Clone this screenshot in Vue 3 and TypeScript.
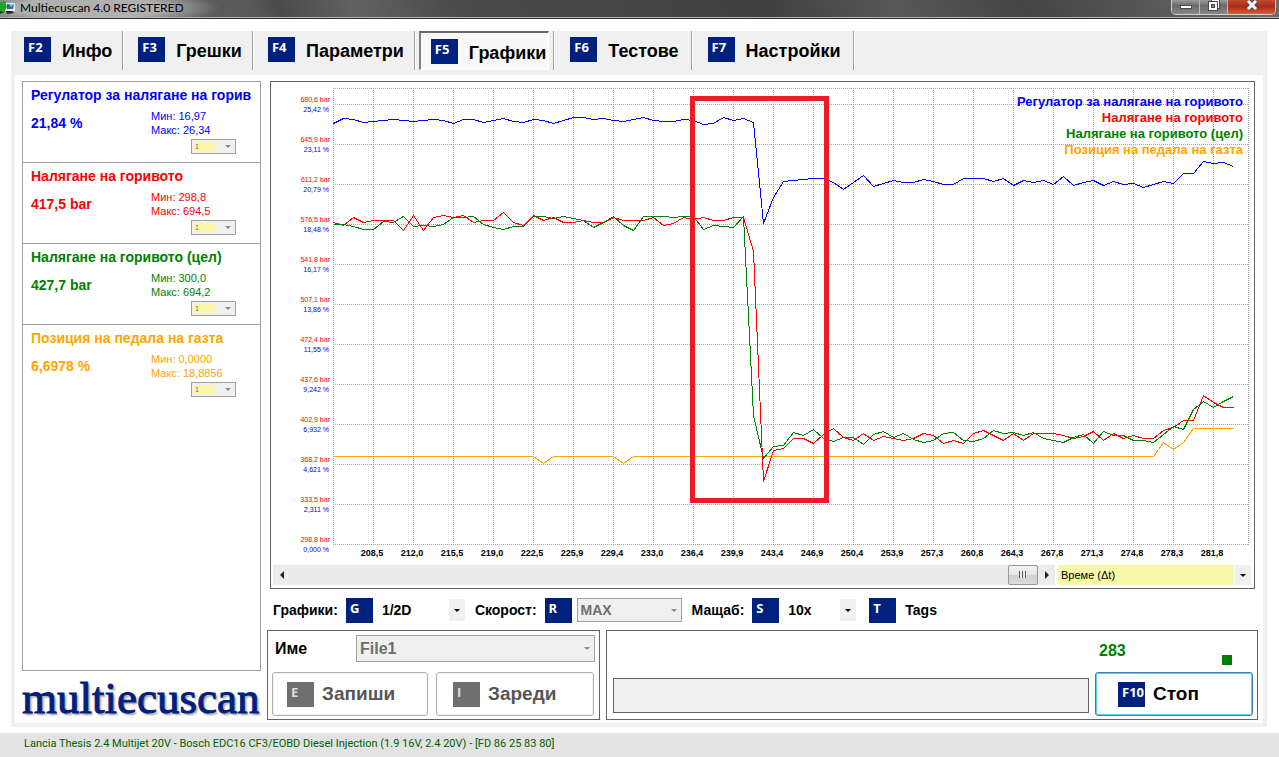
<script setup lang="ts">
import { ref } from 'vue'

interface Tab { key: string; label: string }
interface Param { name: string; short: string; value: string; min: string; max: string; color: string }

const tabs: Tab[] = [
  { key: 'F2', label: 'Инфо' },
  { key: 'F3', label: 'Грешки' },
  { key: 'F4', label: 'Параметри' },
  { key: 'F5', label: 'Графики' },
  { key: 'F6', label: 'Тестове' },
  { key: 'F7', label: 'Настройки' },
]
const activeTab = ref('F5')
const scroll = ref(100)

// the side list has room for 30 characters of a name
const param = (name: string, value: string, min: string, max: string, color: string): Param =>
  ({ name, short: name.slice(0, 30), value, min, max, color })

const params: Param[] = [
  param('Регулатор за налягане на горивото', '21,84 %', '16,97', '26,34', 'blue'),
  param('Налягане на горивото', '417,5 bar', '298,8', '694,5', 'red'),
  param('Налягане на горивото (цел)', '427,7 bar', '300,0', '694,2', 'green'),
  param('Позиция на педала на газта', '6,6978 %', '0,0000', '18,8856', 'orange'),
]

const barTicks = ['680,6', '645,9', '611,2', '576,5', '541,8', '507,1', '472,4', '437,6', '402,9', '368,2', '333,5', '298,8']
const pctTicks = ['25,42', '23,11', '20,79', '18,48', '16,17', '13,86', '11,55', '9,242', '6,932', '4,621', '2,311', '0,000']
const timeTicks = ['208,5', '212,0', '215,5', '219,0', '222,5', '225,9', '229,4', '233,0', '236,4', '239,9', '243,4',
  '246,9', '250,4', '253,9', '257,3', '260,8', '264,3', '267,8', '271,3', '274,8', '278,3', '281,8']

const regulator = [123, 118, 119, 122, 121, 120, 119, 120, 121, 120, 119, 120, 123, 119, 119, 122, 120, 118, 121, 122,
  119, 120, 123, 120, 117, 117, 119, 118, 120, 121, 119, 117, 120, 121, 121, 119, 120, 124, 123, 117,
  120, 118, 122, 223, 197, 181, 180, 179, 178, 178, 182, 189, 182, 175, 186, 183, 180, 182, 182, 179,
  181, 184, 184, 178, 178, 178, 181, 178, 185, 180, 182, 180, 184, 176, 185, 182, 180, 185, 181, 184,
  183, 187, 184, 181, 183, 173, 173, 161, 163, 162, 166]
const pressure = [222, 225, 217, 222, 220, 220, 220, 230, 215, 230, 217, 215, 217, 215, 222, 220, 220, 212, 222, 225,
  215, 220, 217, 222, 222, 220, 222, 222, 217, 220, 220, 220, 217, 225, 223, 217, 219, 217, 220, 220,
  217, 217, 251, 481, 450, 448, 438, 438, 443, 434, 428, 437, 440, 433, 440, 436, 438, 440, 438, 433,
  435, 443, 440, 443, 433, 430, 435, 440, 433, 440, 433, 433, 433, 435, 438, 436, 431, 440, 433, 438,
  435, 438, 438, 430, 427, 420, 420, 395, 402, 407, 407]
const target = [224, 224, 226, 229, 229, 221, 222, 216, 226, 225, 226, 224, 217, 217, 216, 224, 227, 229, 226, 226,
  216, 216, 218, 216, 218, 220, 227, 222, 216, 225, 230, 216, 216, 216, 217, 216, 216, 229, 225, 226,
  227, 216, 415, 458, 446, 445, 432, 435, 429, 438, 441, 437, 437, 444, 434, 431, 437, 433, 439, 442,
  440, 433, 432, 440, 441, 438, 430, 433, 432, 435, 432, 438, 440, 442, 437, 434, 443, 431, 435, 435,
  440, 440, 442, 434, 426, 429, 409, 401, 407, 401, 396]
const pedal = Array.from({ length: 91 }, (_, i) => {
  if (i === 21 || i === 29) return 463
  if (i < 83) return 456
  return [442, 449, 442][i - 83] ?? 428
})

const toPoints = (rows: number[]): string => rows.map((y, i) => `${333.5 + i * 10},${y + 0.5}`).join(' ')
const series = [
  { color: 'orange', points: toPoints(pedal) },
  { color: 'red', points: toPoints(pressure) },
  { color: 'green', points: toPoints(target) },
  { color: 'blue', points: toPoints(regulator) },
]
const rows = [88, ...Array.from({ length: 12 }, (_, i) => 104 + i * 40)]
const cols = [...Array.from({ length: 23 }, (_, i) => 333 + i * 40), 1248]
</script>

<template>
  <div class="window">
    <header class="titlebar">
      <svg class="app-icon" width="16" height="16" viewBox="0 0 16 16" aria-hidden="true">
        <rect x="5" y="3" width="10" height="8" rx="1" fill="#e8eef2" />
        <path d="M7 4h7l-1 5H7z" fill="#2a6f9e" />
        <path d="M9 4h5l-3 3z" fill="#8cc7e8" />
        <path d="M6 11h6l2 2-7 1z" fill="#222" />
        <path d="M0 2l5-1 2 6-3 5-4-1z" fill="#22a52b" />
        <path d="M0 11l5 1-5 2z" fill="#124f16" />
      </svg>
      <span class="title">Multiecuscan 4.0 REGISTERED</span>
      <div class="caption-buttons">
        <button type="button" class="cap" aria-label="Minimize">
          <svg width="14" height="14" viewBox="0 0 14 14"><rect x="1.5" y="5.5" width="11" height="3" fill="#fff" stroke="#4a4a55" /></svg>
        </button>
        <button type="button" class="cap" aria-label="Restore">
          <svg width="14" height="14" viewBox="0 0 14 14">
            <rect x="4.500" y="-0.500" width="8" height="9" fill="#fff" stroke="#4a4a55" />
            <rect x="1.500" y="1.500" width="9" height="9" fill="#fff" stroke="#4a4a55" />
            <rect x="4.500" y="4.500" width="3" height="3" fill="#777" stroke="#4a4a55" />
          </svg>
        </button>
        <button type="button" class="cap close" aria-label="Close">
          <svg width="14" height="14" viewBox="0 0 14 14">
            <path d="M3 1l8 8M11 1l-8 8" stroke="#4a4a55" stroke-width="5" />
            <path d="M3 1l8 8M11 1l-8 8" stroke="#fff" stroke-width="3" />
          </svg>
        </button>
      </div>
    </header>

    <main class="frame">
      <nav class="tabs">
        <div v-for="t in tabs" :key="t.key" class="tab-cell">
          <button type="button" class="tab" :class="{ active: activeTab === t.key }" @click="activeTab = t.key">
            <kbd class="key">{{ t.key }}</kbd><span>{{ t.label }}</span>
          </button>
        </div>
      </nav>

      <div class="content">
        <aside class="side">
          <div class="param-list">
            <section v-for="(p, i) in params" :key="p.name" class="param" :class="p.color">
              <h2>{{ p.short }}</h2>
              <div class="readings">
                <strong>{{ p.value }}</strong>
                <div class="range">
                  <div>Мин: {{ p.min }}</div>
                  <div>Макс: {{ p.max }}</div>
                  <div class="combo mini">
                    <select :id="`axis-${i}`" :aria-label="p.name" disabled><option>1</option></select>
                    <i class="arrow"></i>
                  </div>
                </div>
              </div>
            </section>
          </div>
          <div class="logo">multiecuscan</div>
        </aside>

        <div class="work">
          <section class="chart-panel">
            <svg class="chart" viewBox="271 82 983 481" role="img" aria-label="Графики">
              <g class="grid">
                <line v-for="y in rows" :key="`r${y}`" x1="333" x2="1249" :y1="y + 0.5" :y2="y + 0.5" />
                <line v-for="x in cols" :key="`c${x}`" y1="88" y2="545" :x1="x + 0.5" :x2="x + 0.5" />
              </g>
              <g class="y-labels">
                <text v-for="(t, i) in barTicks" :key="t" x="330" :y="102 + i * 40" fill="red">{{ t }} bar</text>
                <text v-for="(t, i) in pctTicks" :key="t" x="329" :y="112 + i * 40" fill="blue">{{ t }} %</text>
              </g>
              <g class="x-labels">
                <text v-for="(t, i) in timeTicks" :key="t" :x="372 + i * 40" y="556">{{ t }}</text>
              </g>
              <g class="legend">
                <text v-for="(p, i) in params" :key="p.name" x="1243" :y="106 + i * 16" :fill="p.color">{{ p.name }}</text>
              </g>
              <polyline v-for="s in series" :key="s.color" class="line" :points="s.points" :stroke="s.color" />
              <rect class="mark" x="692.5" y="98.5" width="134" height="402" />
            </svg>
            <div class="scroll-row">
              <button type="button" class="step" aria-label="Назад"><i class="left"></i></button>
              <input v-model="scroll" type="range" min="0" max="100" aria-label="Време" />
              <button type="button" class="step" aria-label="Напред"><i class="right"></i></button>
              <div class="combo axis">
                <select aria-label="Ос X"><option>Време (Δt)</option></select>
                <i class="arrow"></i>
              </div>
            </div>
          </section>

          <div class="controls">
            <label for="graphs">Графики:</label>
            <kbd class="key">G</kbd>
            <div class="combo flat graphs">
              <select id="graphs"><option>1/2D</option></select><i class="arrow"></i>
            </div>
            <label for="speed">Скорост:</label>
            <kbd class="key">R</kbd>
            <div class="combo speed">
              <select id="speed" disabled><option>MAX</option></select><i class="arrow"></i>
            </div>
            <label for="zoom">Мащаб:</label>
            <kbd class="key">S</kbd>
            <div class="combo flat scale">
              <select id="zoom"><option>10x</option></select><i class="arrow"></i>
            </div>
            <button type="button" class="tags"><kbd class="key">T</kbd><span>Tags</span></button>
          </div>

          <div class="panels">
            <section class="box file-box">
              <div class="file-row">
                <label for="file">Име</label>
                <div class="combo file">
                  <select id="file" disabled><option>File1</option></select><i class="arrow"></i>
                </div>
              </div>
              <div class="file-buttons">
                <button type="button" class="push" disabled><kbd class="key">E</kbd><span>Запиши</span></button>
                <button type="button" class="push load" disabled><kbd class="key">I</kbd><span>Зареди</span></button>
              </div>
            </section>
            <section class="box run-box">
              <div class="progress" role="progressbar" aria-label="Напредък" aria-valuenow="0"></div>
              <div class="run-side">
                <div class="count"><output>283</output><i class="led"></i></div>
                <button type="button" class="push stop"><kbd class="key">F10</kbd><span>Стоп</span></button>
              </div>
            </section>
          </div>
        </div>
      </div>
    </main>

    <footer class="status">Lancia Thesis 2.4 Multijet 20V - Bosch EDC16 CF3/EOBD Diesel Injection (1.9 16V, 2.4 20V) - [FD 86 25 83 80]</footer>
  </div>
</template>

<style>
body {
  margin: 0;
  background: #fff;
}
</style>

<style scoped>
* {
  box-sizing: border-box;
}
.window {
  font-family: "Liberation Sans", Arial, sans-serif;
  color: #000;
}
button,
select {
  font: inherit;
  color: inherit;
}
.titlebar {
  display: flex;
  height: 19px;
  overflow: hidden;
  border-bottom: 1px solid #2c2c2c;
  box-shadow: inset 0 -1px #b4b4b4;
  background:
    radial-gradient(ellipse 130px 20px at 90px 8px, #b0b0b0 55%, transparent 100%),
    linear-gradient(65deg, #6a6a6a 0%, #585858 20%, #4a4a4a 22%, #626262 28%, #4a4a4a 36%, #404040 60%, #585858 70%, #444 80%, #6c6c6c 100%);
}
.app-icon {
  flex: none;
}
.title {
  margin-left: 4px;
  font: 12px/15px Lato, "Open Sans", sans-serif;
}
.caption-buttons {
  display: flex;
  height: 15px;
  margin: 0 3px 0 auto;
  border: 1px solid #d0d0d0;
  border-top: 0;
  border-radius: 0 0 5px 5px;
  overflow: hidden;
}
.cap {
  width: 28px;
  padding: 0;
  border: 0;
  border-right: 1px solid #b8b8b8;
  line-height: 0;
  background: linear-gradient(#9a9a9a, #6a6a6a 40%, #888);
}
.cap.close {
  width: 47px;
  border-right: 0;
  background: linear-gradient(#c04a35, #a92b14 45%, #d2613c);
}
.frame {
  margin: 12px 12px 0 11px;
  background: #f0f0f0;
  padding: 0 4px 4px;
}
.tabs {
  display: flex;
  height: 44px;
  margin-left: -4px;
}
.tab-cell {
  display: flex;
  height: 39px;
  padding: 0 4px 0 4px;
  border-right: 1px solid #a0a0a0;
  box-shadow: 1px 0 #fff;
}
.tab-cell:first-child {
  padding-left: 2px;
}
.tab-cell:nth-child(n + 5) {
  padding: 0 6px 0 5px;
}
.tab {
  display: flex;
  align-items: center;
  gap: 11px;
  padding: 0 6px 2px 11px;
  border: 0;
  background: none;
  font-size: 18px;
  font-weight: bold;
  line-height: 22px;
}
.tab span {
  padding-top: 3px;
}
.tab.active {
  border: 1px solid #fff;
  border-top: 2px solid #696969;
  border-left: 2px solid #808080;
  padding: 0 2px 0 10px;
  background: #f8f8f8;
}
.key {
  display: block;
  flex: none;
  width: 27px;
  height: 25px;
  padding-left: 4px;
  background: #00207f;
  color: #fff;
  font: bold 13px/20px "Open Sans", "Noto Sans", sans-serif;
  text-align: left;
}
.content {
  display: flex;
  gap: 6px;
  padding: 6px 5px 3px 7px;
  background: #fff;
}
.side {
  display: flex;
  flex-direction: column;
  flex: none;
  width: 239px;
}
.param-list {
  flex: 1;
  border: 1px solid #a0a0a0;
}
.param {
  height: 81px;
  padding: 5px 3px 0 8px;
  border-bottom: 1px solid #a0a0a0;
}
.param:last-child {
  border-bottom: 0;
}
.param h2 {
  margin: 0;
  white-space: nowrap;
  font-size: 14px;
  line-height: 16px;
}
.readings {
  display: flex;
  margin-top: 6px;
}
.readings strong {
  width: 120px;
  font-size: 14px;
  line-height: 28px;
}
.range {
  font-size: 11px;
  line-height: 14px;
}
.blue { color: blue; }
.red { color: red; }
.green { color: green; }
.orange { color: orange; }
.logo {
  height: 49px;
  font: 45px/55px "Liberation Serif", "Times New Roman", serif;
  color: #00207f;
  -webkit-text-stroke: 1px #00207f;
  text-shadow: 2px 2px 2px #999;
}
.work {
  flex: 1;
  min-width: 0;
}

/* drop-downs: the arrow shares the select's grid cell */
.combo {
  display: grid;
  align-items: stretch;
}
.combo select {
  grid-area: 1 / 1;
  appearance: none;
  min-width: 0;
  margin: 0;
  padding: 0 16px 0 3px;
  border: 1px solid #a0a0a0;
  border-radius: 0;
  background: #f0f0f0;
  opacity: 1;
}
.combo select:disabled {
  color: #6d6d6d;
}
.arrow {
  grid-area: 1 / 1;
  place-self: center end;
  margin-right: 5px;
  border: 3px solid transparent;
  border-top-color: #000;
  border-bottom: 0;
  pointer-events: none;
}
.combo select:disabled + .arrow {
  border-top-color: #888;
}
.combo.mini {
  width: 45px;
  height: 15px;
  margin: 2px 0 0 40px;
}
.combo.mini select {
  font-size: 7px;
  line-height: 9px;
  background: linear-gradient(#faf7a8, #faf7a8) 2px 2px / 22px 9px no-repeat #f0f0f0;
}

.chart-panel {
  margin: 0 3px;
  border: 1px solid #646464;
}
.chart {
  display: block;
  width: 100%;
  height: auto;
}
.grid line {
  stroke: #a6a6a6;
  stroke-dasharray: 1 1;
  shape-rendering: crispEdges;
}
.y-labels {
  font-size: 7px;
  text-anchor: end;
}
.x-labels {
  font-size: 9px;
  font-weight: bold;
  text-anchor: middle;
}
.legend {
  font-size: 13px;
  font-weight: bold;
  text-anchor: end;
}
.line {
  fill: none;
  shape-rendering: crispEdges;
}
.mark {
  fill: none;
  stroke: #ed1c24;
  stroke-width: 5;
}
.scroll-row {
  display: flex;
  height: 20px;
  margin: 2px 3px 3px 2px;
}
.step {
  display: grid;
  place-items: center;
  width: 17px;
  padding: 0;
  border: 0;
  background: #ececec;
}
.step .left {
  border: 4px solid transparent;
  border-right-color: #222;
  border-left: 0;
}
.step .right {
  border: 4px solid transparent;
  border-left-color: #222;
  border-right: 0;
}
.scroll-row input {
  flex: 1;
  min-width: 0;
  height: 20px;
  margin: 0;
  appearance: none;
  background: #ececec;
}
.scroll-row input::-webkit-slider-thumb {
  appearance: none;
  width: 30px;
  height: 20px;
  border: 1px solid #979797;
  border-radius: 2px;
  background:
    repeating-linear-gradient(90deg, #555 0 1px, #eee 1px 3px) 10px 5px / 8px 7px no-repeat,
    linear-gradient(#f4f4f4, #e4e4e4 50%, #cfcfcf 50%, #dcdcdc);
}
.combo.axis {
  width: 193px;
  margin-left: 3px;
}
.combo.axis select {
  border: 0;
  font-size: 11px;
  background: linear-gradient(90deg, #f9f7a8 calc(100% - 17px), #fff 0, #fff calc(100% - 16px), #f0f0f0 0);
}
.controls {
  display: flex;
  align-items: center;
  height: 41px;
  padding: 1px 6px 0;
  font-size: 14px;
  font-weight: bold;
}
.controls label {
  white-space: nowrap;
}
.controls .key {
  margin-left: 8px;
}
.controls .combo {
  height: 22px;
  margin-right: 10px;
}
.combo.flat {
  margin-left: 5px;
}
.combo.flat select {
  padding-left: 4px;
  border: 0;
  background: linear-gradient(#f0f0f0, #f0f0f0) right / 16px 100% no-repeat #fff;
}
.combo.graphs {
  width: 87px;
}
.combo.scale {
  width: 72px;
}
.controls .combo.speed {
  width: 105px;
  height: 24px;
  margin: 0 10px 0 5px;
}
.tags {
  display: flex;
  align-items: center;
  gap: 9px;
  padding: 0;
  border: 0;
  background: none;
}
.tags .key {
  margin-left: 3px;
}
.panels {
  display: flex;
  gap: 6px;
}
.box {
  height: 90px;
  border: 1px solid #646464;
  padding: 4px;
}
.file-box {
  flex: none;
  width: 333px;
}
.file-row {
  display: flex;
  align-items: center;
  justify-content: space-between;
  height: 27px;
  padding-left: 3px;
  font-size: 16px;
  font-weight: bold;
}
.combo.file {
  width: 239px;
  height: 27px;
}
.file-buttons {
  display: grid;
  grid-template-columns: 156px 158px;
  gap: 8px;
  margin-top: 10px;
}
.push {
  display: flex;
  align-items: center;
  gap: 8px;
  height: 44px;
  padding: 0 0 0 14px;
  border: 1px solid #adb2b5;
  border-radius: 3px;
  box-shadow: inset 0 0 0 1px #f1f4f5;
  background: #fff;
  font-size: 19px;
  font-weight: bold;
}
.push.load {
  padding-left: 16px;
}
.push:disabled {
  color: #555;
}
.push:disabled .key {
  background: #6f6f6f;
  color: #ddd;
}
.run-box {
  display: flex;
  flex: 1;
  gap: 6px;
  min-width: 0;
}
.progress {
  flex: 1;
  align-self: flex-end;
  height: 35px;
  margin: 0 0 2px 2px;
  border: 1px solid #646464;
  background: #f0f0f0;
}
.run-side {
  width: 158px;
}
.count {
  display: flex;
  justify-content: space-between;
  height: 37px;
  padding: 7px 21px 0 4px;
  color: green;
  font-size: 16px;
  font-weight: bold;
  line-height: 18px;
}
.led {
  width: 10px;
  height: 10px;
  margin-top: 13px;
  background: green;
}
.push.stop {
  width: 100%;
  padding-left: 22px;
  border-color: #3c7fb1;
  box-shadow: inset 0 0 0 1px #5ad2f4;
}
.status {
  margin-top: 6px;
  padding: 0 24px 3px;
  background: #e3e3e3;
  color: #006000;
  font-family: Roboto, "Liberation Sans", sans-serif;
  font-size: 11px;
  line-height: 21px;
}
</style>
